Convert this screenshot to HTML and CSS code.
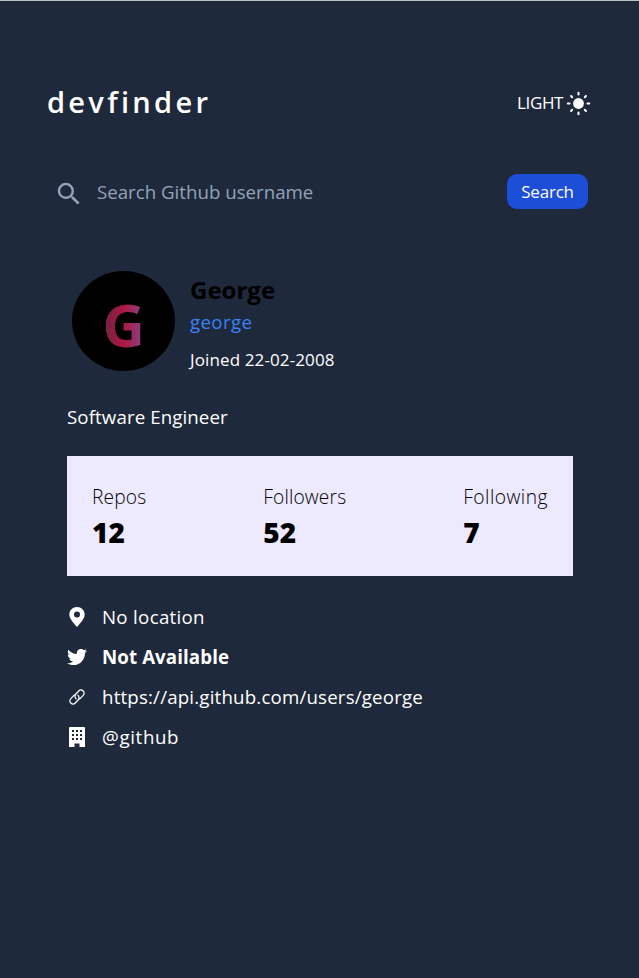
FILE: index.html
```html
<!DOCTYPE html>
<html lang="en">
<head>
<meta charset="utf-8">
<title>devfinder</title>
<link rel="stylesheet" href="styles.css">
</head>
<body>
<main class="page">
  <header class="header">
    <h1 class="logo">devfinder</h1>
    <button class="theme">
      <span class="theme-label">LIGHT</span>
      <svg class="sun" viewBox="0 0 24 24"><circle cx="12" cy="12" r="5.2" fill="currentColor"/><path d="M12 1.700v1.700M12 20.600v1.700M1.700 12h1.700M20.600 12h1.700M4.900 4.900l1 1M18.100 18.100l1 1M4.900 19.100l1-1M18.100 5.900l1-1" stroke="currentColor" stroke-width="2" stroke-linecap="round"/></svg>
    </button>
  </header>
  <form class="search">
    <svg class="search-icon" viewBox="0 0 24 24"><path fill="currentColor" d="M15.5 14h-.79l-.28-.27A6.471 6.471 0 0 0 16 9.5 6.5 6.5 0 1 0 9.5 16c1.61 0 3.09-.59 4.23-1.57l.27.28v.79l5 4.99L20.49 19l-4.99-5zm-6 0C7.01 14 5 11.99 5 9.5S7.01 5 9.5 5 14 7.01 14 9.5 11.99 14 9.5 14z"/></svg>
    <input class="search-input" type="text" placeholder="Search Github username">
    <button class="search-button" type="button">Search</button>
  </form>
  <section class="profile">
    <div class="identity">
      <div class="avatar"><span class="initial">G</span></div>
      <div class="names">
        <h2 class="name">George</h2>
        <p class="handle">george</p>
        <p class="joined">Joined 22-02-2008</p>
      </div>
    </div>
    <p class="bio">Software Engineer</p>
    <div class="stats">
      <div class="stat"><p class="stat-label">Repos</p><p class="stat-value">12</p></div>
      <div class="stat"><p class="stat-label">Followers</p><p class="stat-value">52</p></div>
      <div class="stat"><p class="stat-label stat-label-wide">Following</p><p class="stat-value">7</p></div>
    </div>
    <ul class="details">
      <li class="detail"><svg class="icon" viewBox="0 0 24 24"><path fill="currentColor" fill-rule="evenodd" d="M12 0C6.9 0 2.8 4 2.8 9.1 2.8 14.5 8.7 20.300 12 24c3.300-3.700 9.200-9.500 9.200-14.900C21.200 4 17.100 0 12 0zm0 12.500a3.600 3.600 0 1 1 0-7.200 3.600 3.600 0 0 1 0 7.200z"/></svg><span>No location</span></li>
      <li class="detail"><svg class="icon" viewBox="0 0 512 512"><path fill="currentColor" d="M459.37 151.716c.325 4.548.325 9.097.325 13.645 0 138.720-105.583 298.558-298.558 298.558-59.452 0-114.680-17.219-161.137-47.106 8.447.974 16.568 1.299 25.340 1.299 49.055 0 94.213-16.568 130.274-44.832-46.132-.975-84.792-31.188-98.112-72.772 6.498.974 12.995 1.624 19.818 1.624 9.421 0 18.843-1.300 27.614-3.573-48.081-9.747-84.143-51.980-84.143-102.985v-1.299c13.969 7.797 30.214 12.670 47.431 13.319-28.264-18.843-46.781-51.005-46.781-87.391 0-19.492 5.197-37.360 14.294-52.954 51.655 63.675 129.300 105.258 216.365 109.807-1.624-7.797-2.599-15.918-2.599-24.040 0-57.828 46.782-104.934 104.934-104.934 30.213 0 57.502 12.670 76.670 33.137 23.715-4.548 46.456-13.320 66.599-25.340-7.798 24.366-24.366 44.833-46.132 57.827 21.117-2.273 41.584-8.122 60.426-16.243-14.292 20.791-32.161 39.308-52.628 54.253z"/></svg><b class="handle-missing">Not Available</b></li>
      <li class="detail"><svg class="icon" viewBox="0 0 24 24"><g fill="none" stroke="currentColor" stroke-width="1.700" stroke-linecap="round" transform="translate(1.500 1.500) scale(.875)"><path d="M10.700 14.400a4.600 4.600 0 0 1-.3-6.500l4-4.200a4.300 4.300 0 0 1 6.100 6.100l-3.600 3.800a4.300 4.300 0 0 1-2 1.200"/><path d="M13.300 9.600a4.600 4.600 0 0 1 .3 6.500l-4 4.200a4.300 4.300 0 0 1-6.100-6.100l3.600-3.800a4.300 4.300 0 0 1 2-1.200"/></g></svg><span class="url">https://api.github.com/users/george</span></li>
      <li class="detail"><svg class="icon" viewBox="0 0 20 20"><path fill="currentColor" fill-rule="evenodd" d="M3 0h14a1 1 0 0 1 1 1v19h-5.500v-3.500h-5V20H2V1a1 1 0 0 1 1-1zM5 3v2h2V3zm4 0v2h2V3zm4 0v2h2V3zM5 7v2h2V7zm4 0v2h2V7zm4 0v2h2V7zM5 11v2h2v-2zm4 0v2h2v-2zm4 0v2h2v-2z"/></svg><span class="company">@github</span></li>
    </ul>
  </section>
</main>
</body>
</html>
```
FILE: styles.css
```css
* { box-sizing: border-box; margin: 0; padding: 0; }
body {
  min-height: 978px;
  background: #1e293b;
  border-top: 1px solid #bac0bc;
  color: #fff;
  font: 18.7px/28px "Open Sans", "Noto Sans", sans-serif;
}
button, input { font: inherit; color: inherit; background: none; border: 0; }
.page { padding: 81px 47px 0; }
.header { display: flex; justify-content: space-between; align-items: center; height: 42px; }
.logo { font-size: 29px; font-weight: 600; line-height: 40px; letter-spacing: 3.3px; padding-bottom: 2px; }
.theme { display: flex; align-items: center; gap: 3px; padding-right: 1px; }
.theme-label { font-size: 17px; letter-spacing: -.4px; }
.sun { width: 25px; height: 25px; }
.search { display: flex; align-items: center; height: 36px; margin-top: 49px; padding: 0 4px 0 7px; }
.search-icon { width: 30px; height: 30px; margin-top: 5px; color: #94a3b8; }
.search-input { flex: 1; min-width: 0; padding-left: 13px; height: 36px; }
.search-input::placeholder { color: #94a3b8; opacity: 1; }
.search-button { width: 81px; height: 35px; padding-top: 2px; border-radius: 10px; background: #1d4ed8; font-size: 17px; letter-spacing: -.2px; }
.profile { padding: 62px 19px 0 20px; }
.identity { display: flex; height: 102px; padding-left: 5px; gap: 15px; }
.avatar { display: flex; justify-content: center; width: 103px; height: 100px; border-radius: 50%; background: #000; }
.initial {
  font-size: 59px; font-weight: 700; line-height: 107px;
  background: linear-gradient(90deg, #6b2346 0, #ae1740 50%, #85458c 100%);
  -webkit-background-clip: text; background-clip: text; color: transparent;
}
.name { color: #000; font-size: 24px; font-weight: 700; line-height: 36px; margin-top: 1px; }
.handle { color: #3b82f6; line-height: 28px; letter-spacing: .35px; }
.joined { font-size: 17px; line-height: 24px; margin-top: 12px; letter-spacing: .12px; }
.bio { margin-top: 30px; letter-spacing: .1px; }
.stats { display: flex; justify-content: space-between; height: 120px; margin-top: 25px; padding: 26px 25px; background: #ede9fe; color: #000; }
.stat-label { font-size: 19.2px; font-weight: 300; line-height: 30px; letter-spacing: .15px; }
.stat-label-wide { letter-spacing: .5px; }
.stat-value { font-size: 28px; font-weight: 800; line-height: 40px; }
.details { list-style: none; margin-top: 27px; }
.detail { display: flex; align-items: center; height: 28px; margin-bottom: 12px; gap: 15px; letter-spacing: .3px; }
.handle-missing { letter-spacing: .1px; }
.url { letter-spacing: .18px; }
.company { letter-spacing: .65px; }
.icon { width: 20px; height: 20px; }
```
